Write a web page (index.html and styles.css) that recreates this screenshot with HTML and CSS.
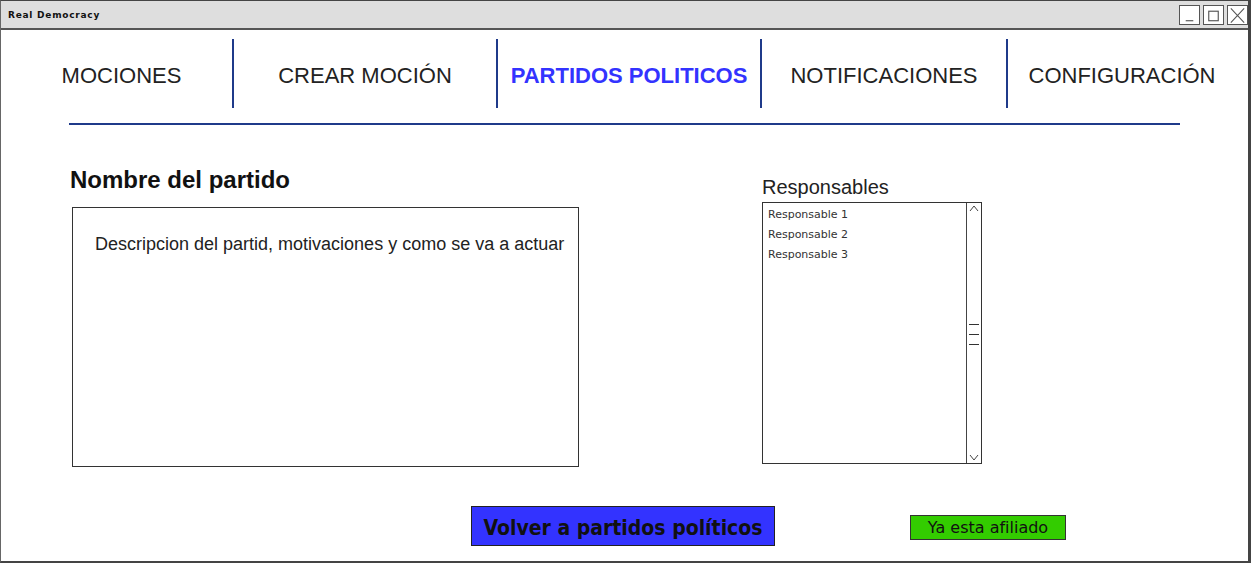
FILE: index.html
```html
<!DOCTYPE html>
<html lang="es">
<head>
<meta charset="utf-8">
<title>Real Democracy</title>
<link rel="stylesheet" href="styles.css">
</head>
<body>
<div class="window">
  <div class="titlebar">
    <span class="title">Real Democracy</span>
    <div class="controls">
      <span class="ctl"><svg width="20" height="19" viewBox="0 0 20 19"><line x1="6" y1="15" x2="14" y2="15" stroke="#555" stroke-width="1.2"/></svg></span>
      <span class="ctl"><svg width="20" height="19" viewBox="0 0 20 19"><rect x="5" y="5" width="10" height="10" fill="none" stroke="#555" stroke-width="1.2"/></svg></span>
      <span class="ctl"><svg width="20" height="19" viewBox="0 0 20 19"><path d="M3 2 L17 17 M17 2 L3 17" stroke="#555" stroke-width="1.1" fill="none"/></svg></span>
    </div>
  </div>
  <nav class="nav">
    <div class="tab t1">MOCIONES</div>
    <div class="tab t2 sep">CREAR MOCIÓN</div>
    <div class="tab t3 sep active">PARTIDOS POLITICOS</div>
    <div class="tab t4 sep">NOTIFICACIONES</div>
    <div class="tab t5 sep">CONFIGURACIÓN</div>
  </nav>
  <div class="rule"></div>
  <main class="main">
    <section class="left">
      <h1 class="heading">Nombre del partido</h1>
      <div class="desc">Descripcion del partid, motivaciones y como se va a actuar</div>
    </section>
    <section class="right">
      <div class="label">Responsables</div>
      <div class="list">
        <ul class="items">
          <li>Responsable 1</li>
          <li>Responsable 2</li>
          <li>Responsable 3</li>
        </ul>
        <div class="scroll">
          <svg class="up" width="14" height="10" viewBox="0 0 14 10"><path d="M3 7 L7 2 L11 7" fill="none" stroke="#444" stroke-width="1"/></svg>
          <div class="grip"><span></span><span></span><span></span></div>
          <svg class="down" width="14" height="10" viewBox="0 0 14 10"><path d="M3 3 L7 8 L11 3" fill="none" stroke="#444" stroke-width="1"/></svg>
        </div>
      </div>
    </section>
  </main>
  <div class="actions">
    <button class="btn-back">Volver a partidos políticos</button>
    <button class="btn-ok">Ya esta afiliado</button>
  </div>
</div>
</body>
</html>
```
FILE: styles.css
```css
* { box-sizing: border-box; }
html, body { margin: 0; padding: 0; background: #fff; }
body { font-family: "Liberation Sans", Arial, sans-serif; color: #222; }

.window {
  width: 1251px;
  height: 563px;
  border-top: 1px solid #444;
  border-left: 1px solid #666;
  border-right: 3px solid #444;
  border-bottom: 2px solid #444;
  overflow: hidden;
}

.titlebar {
  height: 29px;
  background: #dedede;
  border-bottom: 2px solid #555;
  display: flex;
  align-items: center;
  justify-content: space-between;
  padding: 0 0 0 7px;
}
.title {
  font-family: "DejaVu Sans", sans-serif;
  font-size: 9px;
  font-weight: bold;
  color: #111;
  letter-spacing: 0.75px;
  margin-top: 1px;
}
.controls { display: flex; gap: 3px; margin-right: 0; margin-top: 1px; }
.ctl {
  width: 21px; height: 20px;
  border: 1px solid #555;
  background: #fff;
  display: flex; align-items: center; justify-content: center;
}

.nav {
  display: flex;
  margin-top: 9px;
  margin-left: 10px;
  height: 69px;
}
.tab {
  display: flex;
  align-items: center;
  justify-content: center;
  font-size: 22px;
  color: #222;
  padding-top: 4px;
}
.sep { border-left: 2px solid #1f3a8a; }
.t1 { width: 221px; }
.t2 { width: 264px; }
.t3 { width: 264px; }
.t4 { width: 246px; }
.t5 { width: 230px; }
.active { color: #3333ff; font-weight: bold; }

.rule {
  margin: 15px 0 0 68px;
  width: 1111px;
  height: 2px;
  background: #1f3a8a;
}

.main {
  display: flex;
  padding-left: 69px;
  margin-top: 40px;
}
.left { width: 509px; }
.heading {
  margin: 0;
  font-size: 24px;
  font-weight: bold;
  color: #111;
  line-height: 30px;
}
.desc {
  margin-top: 12px;
  margin-left: 2px;
  width: 507px;
  height: 260px;
  border: 1px solid #333;
  padding: 26px 0 0 22px;
  font-size: 18px;
  color: #222;
}

.right { margin-left: 183px; padding-top: 11px; }
.label { font-size: 20px; color: #222; line-height: 22px; }
.list {
  margin-top: 4px;
  width: 220px;
  height: 262px;
  border: 1px solid #333;
  display: flex;
}
.items {
  list-style: none;
  margin: 0;
  padding: 4px 0 0 5px;
  flex: 1;
  font-family: "DejaVu Sans", sans-serif;
  font-size: 11px;
  color: #333;
}
.items li { height: 20px; line-height: 16px; }
.scroll {
  width: 15px;
  border-left: 1px solid #444;
  display: flex;
  flex-direction: column;
  justify-content: space-between;
  align-items: center;
  padding: 1px 0;
}
.grip { display: flex; flex-direction: column; gap: 9px; margin-top: 2px; }
.grip span { display: block; width: 10px; height: 1px; background: #333; }

.actions {
  display: flex;
  align-items: flex-start;
  margin-top: 39px;
  padding-left: 470px;
}
.btn-back {
  width: 304px;
  height: 40px;
  background: #3333ff;
  border: 1px solid #222;
  font-family: "DejaVu Sans Condensed", "DejaVu Sans", sans-serif;
  font-stretch: condensed;
  font-weight: bold;
  font-size: 21px;
  color: #111;
  padding: 3px 0 0 0;
}
.btn-ok {
  margin-left: 135px;
  margin-top: 9px;
  width: 156px;
  height: 25px;
  background: #33cc00;
  border: 1px solid #333;
  font-family: "DejaVu Sans", sans-serif;
  font-size: 16px;
  color: #111;
  padding: 0;
}
```
